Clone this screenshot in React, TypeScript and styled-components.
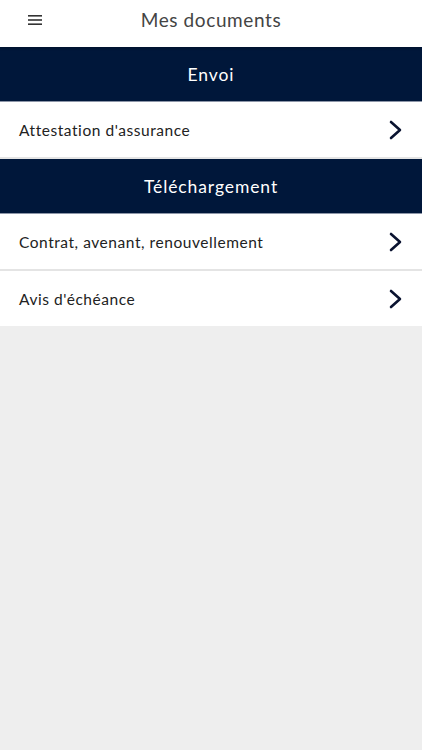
import React from 'react';
import styled, { createGlobalStyle } from 'styled-components';

const GlobalStyle = createGlobalStyle`
  html, body {
    margin: 0;
    padding: 0;
    background: #eeeeee;
    font-family: Lato, "Open Sans", sans-serif;
  }
`;

interface Section {
  title: string;
  items: string[];
}

const sections: Section[] = [
  { title: 'Envoi', items: ["Attestation d'assurance"] },
  { title: 'Téléchargement', items: ['Contrat, avenant, renouvellement', "Avis d'échéance"] },
];

const Chevron = () => (
  <svg width="16" height="20" viewBox="0 0 16 20" fill="none">
    <path d="M3 2 L12 10 L3 18" stroke="#0a1330" strokeWidth="2.6" strokeLinecap="round" strokeLinejoin="round" />
  </svg>
);

const MenuIcon = () => (
  <svg width="14" height="10" viewBox="0 0 14 10">
    <rect x="0" y="0" width="14" height="1.6" fill="#333" />
    <rect x="0" y="4.2" width="14" height="1.6" fill="#333" />
    <rect x="0" y="8.4" width="14" height="1.6" fill="#333" />
  </svg>
);

const App: React.FC = () => (
  <>
    <GlobalStyle />
    <Page>
      <Header>
        <MenuButton>
          <MenuIcon />
        </MenuButton>
        <Title>Mes documents</Title>
      </Header>
      {sections.map((section, s) => (
        <div key={section.title}>
          <SectionBar>{section.title}</SectionBar>
          {section.items.map((item, i) => (
            <Row
              key={item}
              last={s === sections.length - 1 && i === section.items.length - 1}
            >
              <RowLabel>{item}</RowLabel>
              <Chevron />
            </Row>
          ))}
        </div>
      ))}
    </Page>
  </>
);

export default App;

const Page = styled.div`
  min-height: 750px;
  background: #eeeeee;
`;

const Header = styled.header`
  position: relative;
  height: 47px;
  background: #ffffff;
  display: flex;
  align-items: center;
  justify-content: center;
  box-shadow: 0 1px 3px rgba(0, 0, 0, 0.25);
  z-index: 1;
`;

const MenuButton = styled.button`
  position: absolute;
  left: 28px;
  top: 15px;
  padding: 0;
  border: none;
  background: none;
  display: flex;
`;

const Title = styled.h1`
  margin: 0 0 9px;
  font-size: 19px;
  font-weight: 400;
  color: #444444;
  letter-spacing: 0.6px;
`;

const SectionBar = styled.div`
  height: 55px;
  background: #00173a;
  color: #ffffff;
  display: flex;
  align-items: center;
  justify-content: center;
  font-size: 17.5px;
  letter-spacing: 0.9px;
  border-bottom: 1px solid #8d96a8;
  box-sizing: border-box;
`;

const Row = styled.div<{ last: boolean }>`
  height: 55px;
  background: #ffffff;
  display: flex;
  align-items: center;
  justify-content: space-between;
  padding: 0 18px 0 19px;
  border-bottom: ${(p) => (p.last ? 'none' : '2px solid #e4e4e4')};
`;

const RowLabel = styled.span`
  font-size: 15.5px;
  color: #222222;
  letter-spacing: 0.55px;
`;
